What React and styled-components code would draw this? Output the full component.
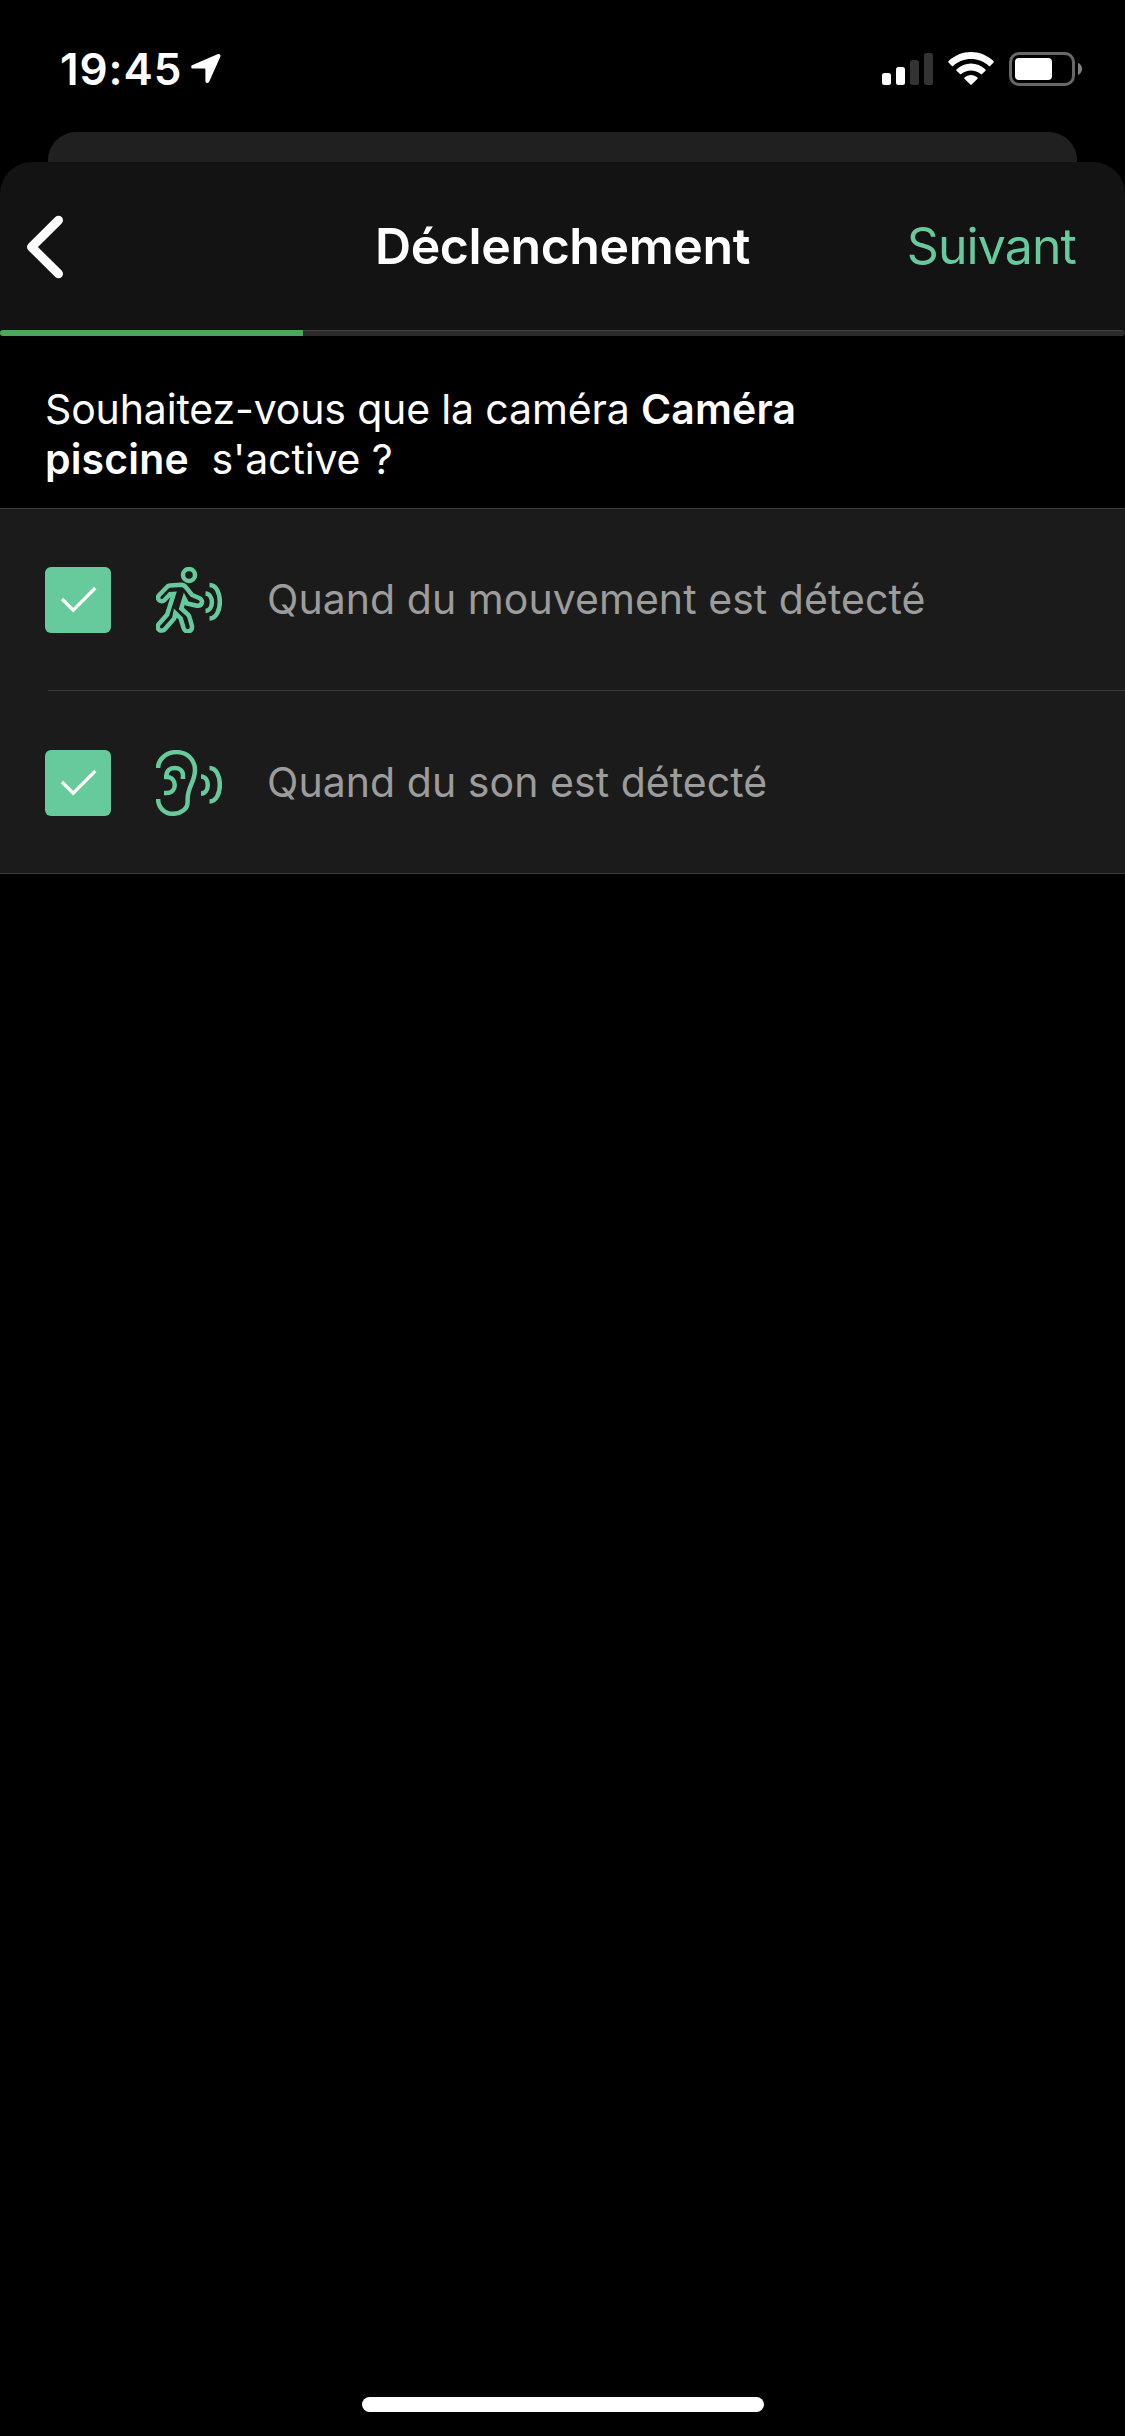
import React from 'react';
import styled, { createGlobalStyle } from 'styled-components';

const GlobalStyle = createGlobalStyle`
  * {
    box-sizing: border-box;
  }

  body {
    margin: 0;
    background: #000;
    font-family: 'Inter', 'Liberation Sans', sans-serif;
    color: #fff;
  }
`;

const Screen = styled.div`
  display: flex;
  flex-direction: column;
  width: 1125px;
  height: 2436px;
  background: #000;
  overflow: hidden;
`;

const StatusBar = styled.div`
  display: flex;
  align-items: flex-start;
  justify-content: space-between;
  height: 132px;
  padding: 52px 43px 0 60px;
`;

const Clock = styled.div`
  display: flex;
  align-items: flex-start;
  gap: 10px;
`;

const Time = styled.span`
  width: 121px;
  font-size: 44px;
  font-weight: 600;
  line-height: 34px;
  letter-spacing: 0.9px;
  white-space: nowrap;
`;

const Indicators = styled.div`
  display: flex;
  align-items: flex-start;
`;

const PreviousSheet = styled.div`
  height: 30px;
  margin: 0 48px;
  border-radius: 28px 28px 0 0;
  background: #202020;
`;

const Sheet = styled.main`
  display: flex;
  flex: 1;
  flex-direction: column;
  border-radius: 32px 32px 0 0;
  background: #000;
  overflow: hidden;
`;

const Header = styled.header`
  display: grid;
  grid-template-columns: 1fr auto 1fr;
  align-items: center;
  height: 168px;
  padding: 1px 48px 0 26px;
  background: #131313;
`;

const BackButton = styled.button`
  display: flex;
  justify-self: start;
  padding: 0;
  border: none;
  background: none;
  color: #fff;
`;

const Title = styled.h1`
  margin: 0;
  padding-bottom: 2px;
  font-size: 50px;
  font-weight: 600;
  line-height: 60px;
  letter-spacing: -0.4px;
  white-space: nowrap;
  transform: translateX(11px);
`;

const NextButton = styled.button`
  justify-self: end;
  padding: 0 1px 2px 0;
  border: none;
  background: none;
  color: #67ca9c;
  font-family: inherit;
  font-size: 50px;
  font-weight: 400;
  line-height: 60px;
  letter-spacing: -0.9px;
`;

const ProgressTrack = styled.div`
  height: 6px;
  border-radius: 3px;
  background: linear-gradient(#404042 1px, #2b2b2d 1px);
  overflow: hidden;
`;

const ProgressFill = styled.div`
  width: 303px;
  height: 6px;
  background: #4ea65b;
`;

const Question = styled.p`
  height: 172px;
  margin: 0;
  padding: 48px 45px 0;
  font-size: 41px;
  line-height: 50px;
  letter-spacing: -0.15px;
  white-space: pre;

  strong {
    font-weight: 600;
    letter-spacing: 0.15px;
  }
`;

const OptionList = styled.div`
  display: flex;
  flex-direction: column;
  border-top: 1px solid #3b3b3b;
  border-bottom: 1px solid #3b3b3b;
  background: #1b1b1b;
`;

const Option = styled.label`
  display: flex;
  align-items: center;
  gap: 45px;
  padding: 58px 0 57px 45px;
`;

const Separator = styled.div`
  height: 1px;
  margin: 0 0 1px 48px;
  background: #3b3b3b;
`;

const Checkbox = styled.span`
  display: flex;
  width: 66px;
  height: 66px;
  border-radius: 6px;
  background: #67ca9c;
`;

const OptionIcon = styled.svg`
  width: 66px;
  height: 66px;
  fill: none;
  stroke: #67ca9c;
  stroke-width: 4.5;
`;

const OptionLabel = styled.span`
  padding-bottom: 2px;
  color: #9c9c9c;
  font-size: 41px;
  line-height: 50px;
  letter-spacing: 0.05px;
  white-space: nowrap;
`;

const HomeIndicator = styled.div`
  width: 402px;
  height: 15px;
  margin: auto auto 24px 362px;
  border-radius: 8px;
  background: #fff;
`;

const LocationIcon = () => (
  <svg width="30" height="34" viewBox="0 0 30 34">
    <path
      d="M1.6 13.1 26.5 2.2C28.6 1.4 30 2.7 29.3 4.7L18.3 29.6C17.4 31.7 14.5 31.4 14.4 29V17.4Q14.4 16.6 13.5 16.6H2.2C-.2 16.4-.5 14 1.6 13.1Z"
      fill="#fff"
    />
  </svg>
);

const SignalIcon = () => (
  <svg width="66" height="34" viewBox="0 0 66 34">
    <rect x="0" y="21" width="9" height="12" rx="2.5" fill="#fff" />
    <rect x="14" y="15" width="9" height="18" rx="2.5" fill="#fff" />
    <rect x="28" y="8" width="9" height="25" rx="2.5" fill="#333" />
    <rect x="42" y="1" width="9" height="32" rx="2.5" fill="#333" />
  </svg>
);

const WifiIcon = () => (
  <svg width="61" height="34" viewBox="0 0 61 34" fill="#fff">
    <path d="M.4 9.3C13-3.1 33-3.1 45.6 9.3Q46 9.9 45.5 10.5L42.1 13.9Q41.5 14.4 40.9 13.9C31 4.7 15 4.7 5.1 13.9Q4.5 14.4 3.9 13.9L.5 10.5Q0 9.9.4 9.3Z" />
    <path d="M8.4 17.5C16.5 9.4 29.5 9.4 37.6 17.5Q38 18.1 37.5 18.7L34 22.1Q33.4 22.5 32.8 22C27.2 17.2 18.8 17.2 13.2 22Q12.6 22.5 12 22.1L8.5 18.7Q8 18.1 8.4 17.5Z" />
    <path d="M16.5 25.5C20.2 22.1 25.8 22.1 29.5 25.5Q30 26.1 29.5 26.7L23.7 32.6Q23 33.2 22.3 32.6L16.5 26.7Q16 26.1 16.5 25.5Z" />
  </svg>
);

const BatteryIcon = () => (
  <svg width="73" height="34" viewBox="0 0 73 34">
    <rect x="1.5" y="1.5" width="63" height="31" rx="8.5" fill="none" stroke="#686868" strokeWidth="3" />
    <rect x="6" y="6" width="37" height="22" rx="4" fill="#fff" />
    <path d="M69 11C74.4 13 74.4 21 69 23Z" fill="#808080" />
  </svg>
);

const BackIcon = () => (
  <svg width="38" height="64" viewBox="0 0 38 64">
    <path
      d="M32.5 5.2 5.5 32 32.5 58.8"
      fill="none"
      stroke="currentColor"
      strokeWidth="9"
      strokeLinecap="round"
      strokeLinejoin="round"
    />
  </svg>
);

const CheckIcon = () => (
  <svg width="66" height="66" viewBox="0 0 66 66">
    <path d="M17 32 28.2 43.2 50.3 21" fill="none" stroke="#fff" strokeWidth="3.2" />
  </svg>
);

const MotionIcon = () => (
  <OptionIcon viewBox="0 0 66 66">
    <circle cx="33" cy="8" r="6" />
    <path d="M3.2 28 11.5 19.5Q12.5 18.6 14 18.5L25 17.8Q28 17.8 29.8 20.2L36 28 43.2 31C48.5 33.6 45.5 40 40 38.5L31 36.5 28.4 31.5 25.3 41.5 32 47.6Q33.3 49 33.6 50.5L35.9 59C37 65 29 66.5 27.6 61L24.7 51.5 19.3 46 18.2 51.5 9.5 61.5C5.5 66.5-1 61.5 2.8 57L11.2 47.5 17.7 27 14 27.2 8.3 33.2C4.5 36 0 32 3.2 28Z" />
    <path d="M49.5 26.5C58 27 58 43.5 49.5 44" />
    <path d="M53.5 18C67.3 18 67.3 51.5 53.5 51.5" />
  </OptionIcon>
);

const SoundIcon = () => (
  <OptionIcon viewBox="0 0 66 66">
    <path d="M2.1 18C2.1 9 10.500 2.100 20.500 2.100 31 2.100 39 9.500 39 20 39 32 31.600 36 31.600 49.500V52C31.600 59 25 63.800 17 63.800 9 63.800 2.100 58 2.100 49" />
    <path d="M27 29V25.500C27 15.500 10.500 15.500 10.500 25.500V27" />
    <path d="M8 27H10.500C21.500 27 21.500 43 10.500 43H8" />
    <path d="M45 26.500C54 26.500 54 43.500 45 43.500" />
    <path d="M53.500 18C67.300 18 67.300 51.500 53.500 51.500" />
  </OptionIcon>
);

const App = () => (
  <>
    <GlobalStyle />
    <Screen>
      <StatusBar>
        <Clock>
          <Time>19:45</Time>
          <LocationIcon />
        </Clock>
        <Indicators>
          <SignalIcon />
          <WifiIcon />
          <BatteryIcon />
        </Indicators>
      </StatusBar>

      <PreviousSheet />

      <Sheet>
        <Header>
          <BackButton aria-label="Retour">
            <BackIcon />
          </BackButton>
          <Title>Déclenchement</Title>
          <NextButton>Suivant</NextButton>
        </Header>
        <ProgressTrack>
          <ProgressFill />
        </ProgressTrack>

        <Question>
          Souhaitez-vous que la caméra <strong>Caméra</strong>
          <br />
          <strong>piscine</strong>
          {"  s'active ?"}
        </Question>

        <OptionList>
          <Option>
            <Checkbox>
              <CheckIcon />
            </Checkbox>
            <MotionIcon />
            <OptionLabel>Quand du mouvement est détecté</OptionLabel>
          </Option>
          <Separator />
          <Option>
            <Checkbox>
              <CheckIcon />
            </Checkbox>
            <SoundIcon />
            <OptionLabel>Quand du son est détecté</OptionLabel>
          </Option>
        </OptionList>

        <HomeIndicator />
      </Sheet>
    </Screen>
  </>
);

export default App;
